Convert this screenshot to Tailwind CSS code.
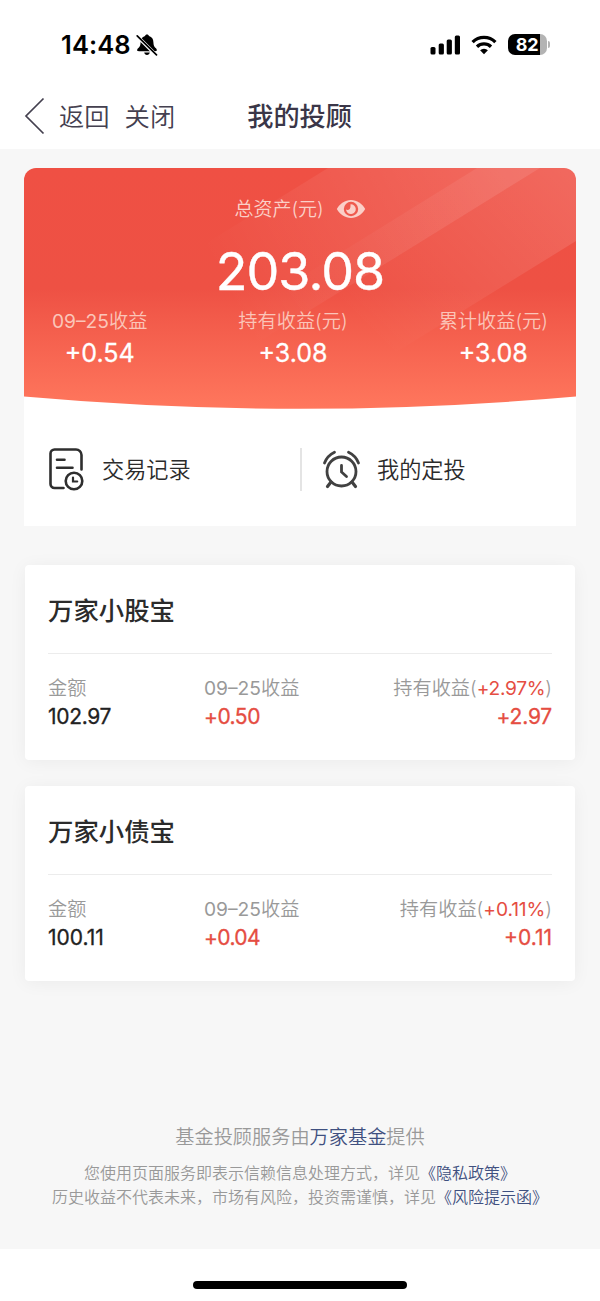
<!DOCTYPE html>
<html lang="zh-CN">
<head>
    <meta charset="UTF-8">
    <meta name="viewport" content="width=device-width, initial-scale=1.0">
    <title>我的投顾</title>
    <script src="https://cdn.jsdelivr.net/npm/@tailwindcss/browser@4"></script>
</head>
<body class="bg-white font-['Inter','Noto_Sans_CJK_SC',sans-serif] text-[#2b2b2b]">
    <div class="w-[600px] h-[1301px] flex flex-col overflow-hidden">
        <!-- status bar -->
        <div class="h-[82px] pt-[7px] pl-[61px] pr-[50px] flex items-center justify-between text-black shrink-0">
            <div class="flex items-center gap-[5px]">
                <span class="text-[25.500px] leading-[30px] font-semibold tracking-[0.1px]">14:48</span>
                <svg class="w-[22px] h-[22px]" viewBox="0 0 22 22">
                    <path d="M11 0.5c-1 0-1.800.6-2 1.500C6 3 4.700 5.200 4.600 8.200c-.1 3.300-.7 4.300-2.200 5.800-.9.900-1.200 1.400-1.200 2 0 .8.600 1.200 1.600 1.200h16.400c1 0 1.600-.4 1.600-1.200 0-.6-.3-1.100-1.200-2-1.500-1.500-2.100-2.500-2.200-5.800C17.300 5.200 16 3 13 2c-.2-.9-1-1.500-2-1.500zM8.200 18.600h5.600c-.3 1.500-1.300 2.400-2.800 2.400s-2.500-.9-2.800-2.400z"/>
                    <path d="M0.500 1.500L20.500 21.500" stroke="#fff" stroke-width="3.400"/>
                    <path d="M1.200 1.800L20.500 20.800" stroke="#000" stroke-width="1.700" stroke-linecap="round"/>
                </svg>
            </div>
            <div class="flex items-center">
                <svg class="w-[31px] h-[20px]" viewBox="0 0 31 20">
                    <rect x="0.500" y="12" width="5" height="7.500" rx="1.500"/>
                    <rect x="8.700" y="8.500" width="5.200" height="11" rx="1.500"/>
                    <rect x="16.700" y="4.500" width="5.200" height="15" rx="1.500"/>
                    <rect x="24.800" y="0.500" width="5.200" height="19" rx="1.500"/>
                </svg>
                <svg class="w-[26px] h-[20px] ml-[10px]" viewBox="0 0 26 20" fill="none" stroke="#000" stroke-width="3.300">
                    <path d="M1.600 7.100a16.200 16.200 0 0 1 22.800 0"/>
                    <path d="M6 11.700a10 10 0 0 1 14 0"/>
                    <path d="M13 19.200l-3.900-3.900a5.600 5.600 0 0 1 7.800 0z" fill="#000" stroke="none"/>
                </svg>
                <div class="ml-[11px] w-[39px] h-[21px] rounded-[7px] bg-linear-to-r from-black from-82% to-[#b3b3b3] to-82% text-white text-[18px] leading-[21px] font-bold text-center pl-[1px] pr-[2px] tracking-[-0.4px]">82</div>
                <div class="ml-[1px] w-[2px] h-[7px] rounded-r-full bg-[#b3b3b3]"></div>
            </div>
        </div>
        <!-- nav bar -->
        <div class="h-[67px] pl-[24px] flex items-center text-[#44404f] shrink-0">
            <svg class="w-[21px] h-[38px]" viewBox="0 0 21 38" fill="none" stroke="currentColor" stroke-width="1.700"><path d="M19.500 1.500L2 19l17.500 17.500"/></svg>
            <span class="pt-[2px] ml-[14px] text-[25.300px] leading-[36px] font-[350]">返回</span>
            <span class="pt-[2px] ml-[15px] text-[25.300px] leading-[36px] font-[350]">关闭</span>
            <h1 class="pt-[2px] ml-[72px] text-[26.200px] leading-[36px] font-medium text-[#3a3648]">我的投顾</h1>
        </div>
        <!-- page -->
        <main class="h-[1100px] bg-[#f7f7f7] px-[24px] pt-[19px] shrink-0">
            <section class="relative h-[358px] bg-white rounded-t-[12px] overflow-hidden">
                <svg class="absolute inset-0 w-[552px] h-[242px]" viewBox="0 0 552 242">
                    <defs>
                        <linearGradient id="red" x1="0" y1="0" x2="0" y2="1">
                            <stop offset="0" stop-color="#ef5044"/>
                            <stop offset="0.500" stop-color="#ee5144"/>
                            <stop offset="1" stop-color="#ff775d"/>
                        </linearGradient>
                        <linearGradient id="beam" gradientUnits="userSpaceOnUse" x1="500" y1="0" x2="270" y2="150">
                            <stop offset="0" stop-color="#fff" stop-opacity="0.080"/>
                            <stop offset="1" stop-color="#fff" stop-opacity="0"/>
                        </linearGradient>
                        <linearGradient id="wide" gradientUnits="userSpaceOnUse" x1="540" y1="0" x2="360" y2="180">
                            <stop offset="0" stop-color="#fff" stop-opacity="0.140"/>
                            <stop offset="1" stop-color="#fff" stop-opacity="0"/>
                        </linearGradient>
                        <linearGradient id="soft" gradientUnits="userSpaceOnUse" x1="480" y1="0" x2="210" y2="140">
                            <stop offset="0" stop-color="#fff" stop-opacity="0.140"/>
                            <stop offset="1" stop-color="#fff" stop-opacity="0"/>
                        </linearGradient>
                    </defs>
                    <path d="M0 0H552V228.500Q276 253 0 228.500Z" fill="url(#red)"/>
                    <path d="M304 0H516L160 220L100 126Z" fill="url(#soft)"/>
                    <path d="M516 0H552V73L340 204L200 195Z" fill="url(#wide)"/>
                    <path d="M453 0H516L256 161L150 188Z" fill="url(#beam)"/>
                </svg>
                <div class="relative h-[242px] text-white">
                    <div class="pt-[27px] flex justify-center items-start gap-[12px] text-[19px] leading-[28px] font-[350] text-[#fbd0c8]">
                        <span class="pt-[1px]">总资产(元)</span>
                        <svg class="mt-[4px] w-[30px] h-[20px]" viewBox="0 0 30 20">
                            <path d="M.8 10C4 4.500 9 1 15 1s11 3.500 14.200 9C26 15.500 21 19 15 19S4 15.500.8 10z" fill="#fbcfc8"/>
                            <circle cx="15" cy="10" r="7.200" fill="#ef5a4e"/>
                            <path d="M14.500 5.300a4.900 4.900 0 1 1-4.500 5.300c1 .8 2.800.5 3.700-.6.900-1.200.9-2.900.8-4.700z" fill="#fbcfc8"/>
                        </svg>
                    </div>
                    <div class="mt-[16px] text-center text-[52px] leading-[64px] font-normal tracking-[-0.900px] [-webkit-text-stroke:0.4px_#fff]">203.08</div>
                    <div class="mt-[3px] pl-[28px] pr-[28px] flex justify-between text-center">
                        <div>
                            <div class="text-[19.200px] leading-[28px] font-[350] text-[#fbc5b9]"><span class="font-normal">09–25</span>收益</div>
                            <div class="mt-[1px] text-[25px] leading-[34px] font-normal [-webkit-text-stroke:0.3px_#fff]">+0.54</div>
                        </div>
                        <div>
                            <div class="text-[19.200px] leading-[28px] font-[350] text-[#fbc5b9]">持有收益(元)</div>
                            <div class="mt-[1px] text-[25px] leading-[34px] font-normal [-webkit-text-stroke:0.3px_#fff]">+3.08</div>
                        </div>
                        <div>
                            <div class="text-[19.200px] leading-[28px] font-[350] text-[#fbc5b9]">累计收益(元)</div>
                            <div class="mt-[1px] text-[25px] leading-[34px] font-normal [-webkit-text-stroke:0.3px_#fff]">+3.08</div>
                        </div>
                    </div>
                </div>
                <div class="h-[116px] pb-[1px] flex items-start pt-[38px]">
                    <div class="w-[276px] h-[44px] pl-[24px] flex items-center">
                        <svg class="w-[38px] h-[44px]" viewBox="0 0 38 44" fill="none" stroke="#2e2e2e" stroke-width="2.600" stroke-linecap="round">
                            <path d="M15.500 40H6.500a4 4 0 0 1-4-4V5.500a4 4 0 0 1 4-4H28a5.500 5.500 0 0 1 5.500 5.500V21.500"/>
                            <path d="M9 11.800h7.500M9 19.800h15.500"/>
                            <circle cx="26" cy="33" r="8.300"/>
                            <path d="M25 29.500v4h4.200" stroke-width="2.200"/>
                        </svg>
                        <span class="ml-[16px] text-[22.200px] leading-[32px] font-[350]">交易记录</span>
                    </div>
                    <div class="w-[2px] h-[43px] bg-[#e4e4e4]"></div>
                    <div class="h-[44px] pl-[20px] flex items-center">
                        <svg class="w-[39px] h-[40px]" viewBox="0 0 39 40" fill="none" stroke="#414141" stroke-width="2.800" stroke-linecap="round">
                            <circle cx="19.500" cy="21.500" r="14.500"/>
                            <path d="M2.500 13A20 20 0 0 1 12.500 2.300M36.500 13A20 20 0 0 0 26.500 2.300"/>
                            <path d="M19.500 15.500v6.500l5 4.500"/>
                            <path d="M9 32l-3.500 4.500M30 32l3.500 4.500" stroke-width="3.200"/>
                        </svg>
                        <span class="ml-[16px] text-[22.200px] leading-[32px] font-[350]">我的定投</span>
                    </div>
                </div>
            </section>

            <section class="mt-[39px] mx-[1px] h-[195px] px-[23px] bg-white rounded-[4px] shadow-[0_2px_18px_rgba(0,0,0,0.05)]">
                <h2 class="h-[89px] pt-[27px] text-[25.400px] leading-[37px] font-medium border-b border-[#ececec]">万家小股宝</h2>
                <div class="pt-[20px] flex text-[19.200px] leading-[28px] font-[350] text-[#999]">
                    <div class="w-[156px]">
                        <div>金额</div>
                        <div class="mt-[1px] text-[21px] font-normal [-webkit-text-stroke:0.3px_currentColor] tracking-[-0.300px] text-[#222]">102.97</div>
                    </div>
                    <div>
                        <div><span class="font-normal">09–25</span>收益</div>
                        <div class="mt-[1px] text-[21px] font-normal [-webkit-text-stroke:0.3px_currentColor] tracking-[-0.500px] text-[#e54d42]">+0.50</div>
                    </div>
                    <div class="ml-auto text-right">
                        <div>持有收益(<span class="font-normal tracking-[-0.300px] text-[#e54d42]">+2.97%</span>)</div>
                        <div class="mt-[1px] text-[21px] font-normal [-webkit-text-stroke:0.3px_currentColor] tracking-[-0.200px] text-[#e54d42]">+2.97</div>
                    </div>
                </div>
            </section>

            <section class="mt-[26px] mx-[1px] h-[195px] px-[23px] bg-white rounded-[4px] shadow-[0_2px_18px_rgba(0,0,0,0.05)]">
                <h2 class="h-[89px] pt-[27px] text-[25.400px] leading-[37px] font-medium border-b border-[#ececec]">万家小债宝</h2>
                <div class="pt-[20px] flex text-[19.200px] leading-[28px] font-[350] text-[#999]">
                    <div class="w-[156px]">
                        <div>金额</div>
                        <div class="mt-[1px] text-[21px] font-normal [-webkit-text-stroke:0.3px_currentColor] text-[#222]">100.11</div>
                    </div>
                    <div>
                        <div><span class="font-normal">09–25</span>收益</div>
                        <div class="mt-[1px] text-[21px] font-normal [-webkit-text-stroke:0.3px_currentColor] tracking-[-0.600px] text-[#e54d42]">+0.04</div>
                    </div>
                    <div class="ml-auto text-right">
                        <div>持有收益(<span class="font-normal tracking-[-0.100px] text-[#e54d42]">+0.11%</span>)</div>
                        <div class="mt-[1px] text-[21px] font-normal [-webkit-text-stroke:0.3px_currentColor] text-[#e54d42]">+0.11</div>
                    </div>
                </div>
            </section>

            <footer class="mt-[142px] text-center font-[350] text-[#999] whitespace-nowrap">
                <p class="text-[19.200px] leading-[28px]">基金投顾服务由<a class="text-[#3f5080]">万家基金</a>提供</p>
                <p class="mt-[10px] text-[16px] leading-[24px]">您使用页面服务即表示信赖信息处理方式，详见<a class="text-[#3f5080]">《隐私政策》</a></p>
                <p class="text-[16px] leading-[24px]">历史收益不代表未来，市场有风险，投资需谨慎，详见<a class="text-[#3f5080]">《风险提示函》</a></p>
            </footer>
        </main>
        <div class="mt-[32px] mx-auto w-[214px] h-[8px] rounded-full bg-black shrink-0"></div>
    </div>
</body>
</html>
